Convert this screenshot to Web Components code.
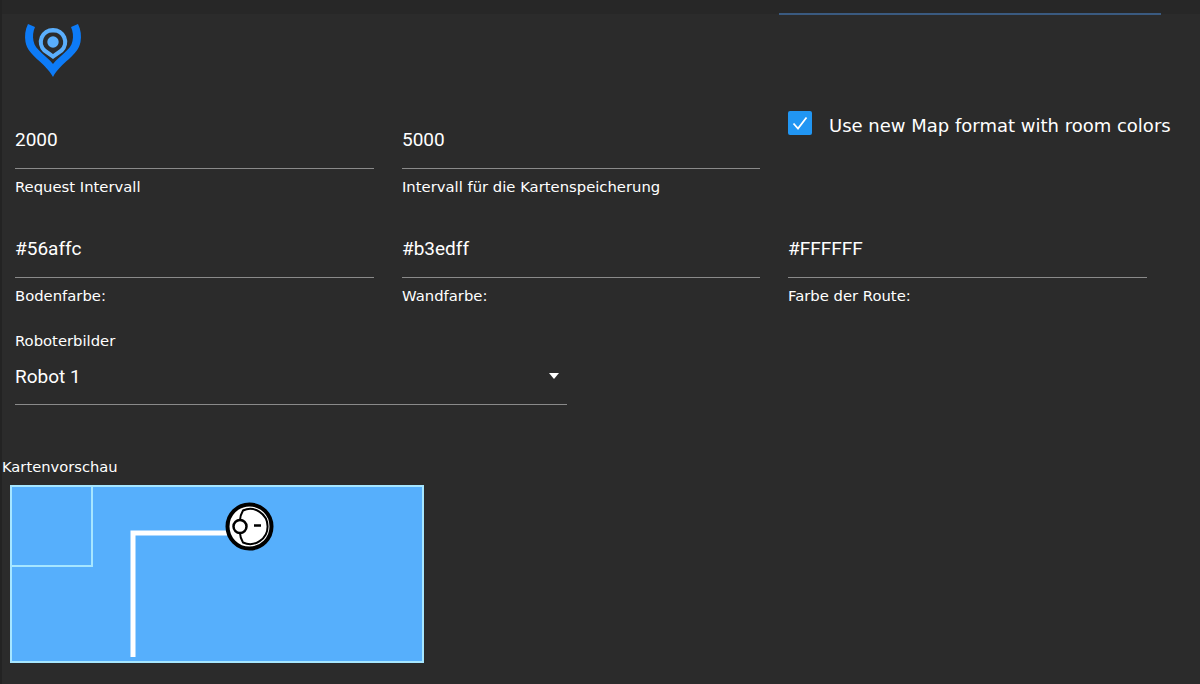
<!DOCTYPE html>
<html lang="de">
<head>
<meta charset="utf-8">
<title>Einstellungen</title>
<style>
  html, body { margin: 0; height: 100%; background: #2b2b2b; }
  body { color: #fff; font-family: "DejaVu Sans", sans-serif; overflow: hidden; }
</style>
</head>
<body>
<settings-page>
  <app-logo slot="logo"></app-logo>
  <text-field value="2000" label="Request Intervall"></text-field>
  <text-field value="5000" label="Intervall für die Kartenspeicherung"></text-field>
  <check-field label="Use new Map format with room colors"></check-field>
  <text-field value="#56affc" label="Bodenfarbe:"></text-field>
  <text-field value="#b3edff" label="Wandfarbe:"></text-field>
  <text-field value="#FFFFFF" label="Farbe der Route:"></text-field>
  <select-field slot="select" value="Robot 1" label="Roboterbilder"></select-field>
  <map-preview slot="preview" label="Kartenvorschau"></map-preview>
</settings-page>

<script>
class SettingsPage extends HTMLElement {
  constructor() {
    super();
    this.attachShadow({ mode: "open" });
  }

  connectedCallback() {
    this.shadowRoot.innerHTML = `
      <style>
        :host {
          display: block;
          height: 684px;
          box-sizing: border-box;
          border-left: 2px solid #232323;
        }
        .tabs {
          height: 14px;
          background: #272727;
          padding-left: 777px;
        }
        .tabs div {
          width: 382px;
          height: 15px;
          box-sizing: border-box;
          border-bottom: 2px solid #3a5a80;
        }
        .logo { height: 104px; }
        .grid {
          display: grid;
          grid-template-columns: 359px 358px 359px;
          column-gap: 28px;
          grid-auto-rows: 109px;
          padding-left: 13px;
        }
        .select { margin-top: -5px; padding-left: 13px; height: 126px; }
      </style>
      <div class="tabs"><div></div></div>
      <div class="logo"><slot name="logo"></slot></div>
      <div class="grid"><slot></slot></div>
      <div class="select"><slot name="select"></slot></div>
      <slot name="preview"></slot>
    `;
  }
}

class AppLogo extends HTMLElement {
  constructor() {
    super();
    this.attachShadow({ mode: "open" });
    this.shadowRoot.innerHTML = `
      <style>
        :host { display: block; padding: 8px 0 0 22px; }
        svg { display: block; }
      </style>
      <svg width="58" height="56" viewBox="24 22 58 56">
        <path fill="#0d7bf7" d="M28 24L35 27C33 32 32.5 36 33.5 41C35 50 46 55 53 64C60 55 71 50 72.5 41C73.5 36 73 32 71 27L78 24C81 30 81.5 36 80.5 42C78 56 61 62 53 77C45 62 28 56 25.5 42C24.5 36 25 30 28 24Z"/>
        <path fill="#5aaefc" d="M53 28A14 14 0 0 1 63 52L53 59L43 52A14 14 0 0 1 53 28Z"/>
        <path fill="#2b2b2b" d="M53 32.5A9.5 9.5 0 0 1 60 49L53 54L46 49A9.5 9.5 0 0 1 53 32.5Z"/>
        <circle cx="53" cy="42" r="5.7" fill="#5aaefc"/>
      </svg>
    `;
  }
}

class TextField extends HTMLElement {
  constructor() {
    super();
    this.attachShadow({ mode: "open" });
  }

  connectedCallback() {
    this.shadowRoot.innerHTML = `
      <style>
        :host { display: block; }
        .value {
          height: 50px;
          border-bottom: 1px solid #8a8a8a;
          font: 19px/44px Roboto, sans-serif;
          color: #fff;
        }
        .label {
          margin-top: 8px;
          font-size: 14.8px;
          line-height: 20px;
          color: #fff;
        }
      </style>
      <div class="value">${this.getAttribute("value")}</div>
      <div class="label">${this.getAttribute("label")}</div>
    `;
  }
}

class CheckField extends HTMLElement {
  constructor() {
    super();
    this.attachShadow({ mode: "open" });
  }

  connectedCallback() {
    this.shadowRoot.innerHTML = `
      <style>
        :host {
          display: flex;
          align-items: center;
          gap: 17px;
          height: 24px;
          margin-top: -7px;
          white-space: nowrap;
        }
        .box {
          width: 24px;
          height: 24px;
          flex: none;
          border-radius: 2px;
          background: #2196f3;
        }
        svg { display: block; }
        span { font-size: 18px; color: #fff; padding-top: 4px; }
      </style>
      <div class="box">
        <svg width="24" height="24" viewBox="0 0 24 24"><path d="M5.5 12.5l4.5 5 8.5-11" fill="none" stroke="#fff" stroke-width="1.8"/></svg>
      </div>
      <span>${this.getAttribute("label")}</span>
    `;
  }
}

class SelectField extends HTMLElement {
  constructor() {
    super();
    this.attachShadow({ mode: "open" });
  }

  connectedCallback() {
    this.shadowRoot.innerHTML = `
      <style>
        :host { display: block; width: 552px; }
        .label { font-size: 14.8px; line-height: 20px; color: #fff; }
        .row {
          display: flex;
          justify-content: space-between;
          align-items: center;
          height: 54px;
          padding: 0 8px 3px 0;
          box-sizing: border-box;
          border-bottom: 1px solid #8a8a8a;
          font: 19px Roboto, sans-serif;
        }
        .arrow {
          width: 0;
          height: 0;
          border-left: 5.5px solid transparent;
          border-right: 5.5px solid transparent;
          border-top: 6px solid #fff;
        }
      </style>
      <div class="label">${this.getAttribute("label")}</div>
      <div class="row"><span>${this.getAttribute("value")}</span><i class="arrow"></i></div>
    `;
  }
}

class MapPreview extends HTMLElement {
  constructor() {
    super();
    this.attachShadow({ mode: "open" });
  }

  connectedCallback() {
    this.shadowRoot.innerHTML = `
      <style>
        :host { display: block; }
        .label { font-size: 14.7px; line-height: 20px; color: #fff; }
        svg { display: block; margin: 8px 0 0 8px; }
      </style>
      <div class="label">${this.getAttribute("label")}</div>
      <svg width="414" height="178" viewBox="10 485 414 178">
        <rect x="11" y="486" width="412" height="176" fill="#56affc" stroke="#a6e6ff" stroke-width="2"/>
        <rect x="11" y="486" width="81" height="80" fill="none" stroke="#a6e6ff" stroke-width="2"/>
        <path d="M133 657V533H230" fill="none" stroke="#fff" stroke-width="5"/>
        <circle cx="249.5" cy="526.5" r="22" fill="#fff" stroke="#000" stroke-width="4"/>
        <path d="M240 520C240 516 241 514 243 510.5A17.5 17.5 0 1 1 243 542.5C241 539 240 537 240 533" fill="none" stroke="#000" stroke-width="2"/>
        <circle cx="240" cy="526.5" r="6.5" fill="#fff" stroke="#000" stroke-width="2.5"/>
        <path d="M254 525.5H261" stroke="#000" stroke-width="2.5"/>
      </svg>
    `;
  }
}

customElements.define("settings-page", SettingsPage);
customElements.define("app-logo", AppLogo);
customElements.define("text-field", TextField);
customElements.define("check-field", CheckField);
customElements.define("select-field", SelectField);
customElements.define("map-preview", MapPreview);
</script>
</body>
</html>
